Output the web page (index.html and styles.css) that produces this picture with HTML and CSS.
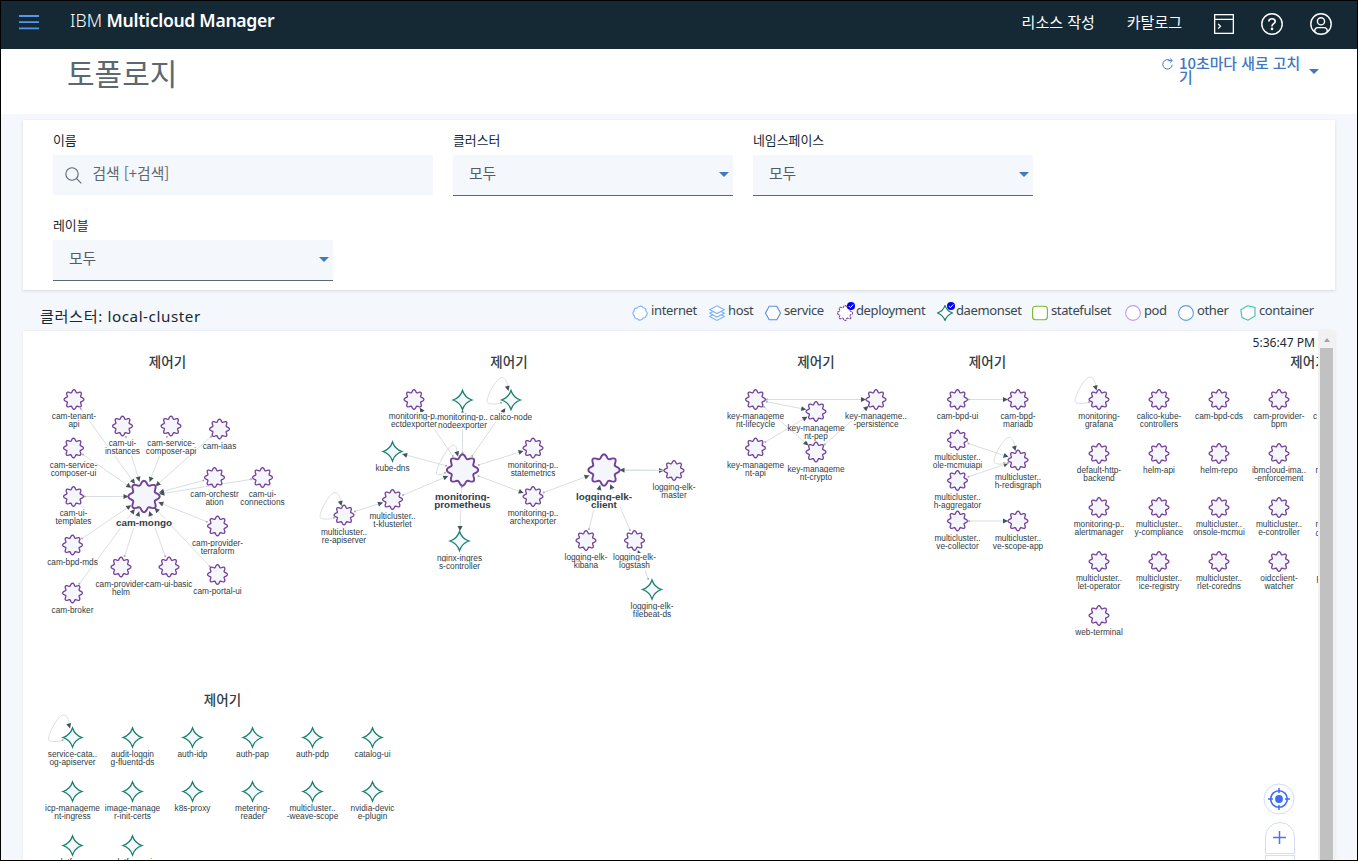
FILE: index.html
```html
<!DOCTYPE html>
<html lang="ko">
<head>
<meta charset="utf-8">
<title>IBM Multicloud Manager</title>
<link rel="stylesheet" href="styles.css">
</head>
<body>
<header class="topbar">
  <svg class="menu" width="20" height="15" viewBox="0 0 20 15"><path d="M0 1h20M0 7.2h20M0 13.4h20" stroke="#5596e6" stroke-width="1.8"/></svg>
  <div class="brand"><span class="brand-light">IBM</span> Multicloud Manager</div>
  <nav class="actions">
    <a class="act act-create">리소스 작성</a>
    <a class="act act-catalog">카탈로그</a>
    <svg class="ic-term" width="20" height="20" viewBox="0 0 20 20" fill="none" stroke="#fff" stroke-width="1.3"><rect x=".65" y=".65" width="18.7" height="18.7"/><path d="M.6 5.3h18.8M4.2 10l2.3 2.3-2.3 2.3"/></svg>
    <svg class="ic-help" width="22" height="22" viewBox="0 0 22 22" fill="none" stroke="#fff" stroke-width="1.4"><circle cx="11" cy="11" r="10.2"/><path d="M7.8 8.5c0-1.8 1.3-2.8 3.2-2.8s3.2 1.100 3.200 2.700c0 2-3.200 2.300-3.200 4.400v.6" stroke-width="1.6"/><circle cx="11" cy="15.900" r=".6" fill="#fff"/></svg>
    <svg class="ic-user" width="22" height="22" viewBox="0 0 22 22" fill="none" stroke="#fff" stroke-width="1.400"><circle cx="11" cy="11" r="10.200"/><circle cx="11" cy="8.300" r="3.600"/><path d="M4.800 19v-1.200c0-1.900 1.300-3.200 3.200-3.200h6c1.900 0 3.200 1.300 3.200 3.200V19"/></svg>
  </nav>
</header>
<div class="titlebar">
  <h1 class="title">토폴로지</h1>
  <div class="refresh">
    <svg class="refresh-ic" width="11" height="12" viewBox="0 0 11 12" fill="none" stroke="#4178be"><path d="M8.200 2.500A4.700 4.700 0 1 0 10.200 6.800M6.200 2.600h3.600M8.200.4l1.900 2.200-1.900 2.100"/></svg>
    <span class="refresh-text">10초마다 새로 고치기</span>
    <i class="caret refresh-caret"></i>
  </div>
</div>
<main class="page">
  <section class="filters">
    <div class="field field-name"><label class="label">이름</label>
      <div class="search"><svg width="17" height="17" viewBox="0 0 17 17" fill="none" stroke="#5a6872" stroke-width="1.100"><circle cx="7" cy="7" r="6.200"/><path d="M11.600 11.600l4.700 4.700"/></svg><span>검색 [+검색]</span></div></div>
    <div class="field"><label class="label">클러스터</label><div class="select"><span>모두</span><i class="caret"></i></div></div>
    <div class="field"><label class="label">네임스페이스</label><div class="select"><span>모두</span><i class="caret"></i></div></div>
    <div class="field"><label class="label">레이블</label><div class="select"><span>모두</span><i class="caret"></i></div></div>
  </section>
  <div class="cluster-head">
    <h2 class="cluster-name">클러스터: local-cluster</h2>
    <ul class="legend">
      <li><svg viewBox="0 0 16 16"><path d="M8 1.200C9.500.8 10.500 1.500 11.200 2.800 13.500 3 14.200 4 13.800 5.800 15.700 7.500 15.600 9.500 14 11 13.600 12.700 12.500 13.200 11 13 9.800 15.500 7 15.700 5.600 13.800 3.500 13.800 2.300 12.800 2.500 11 .4 9.500.4 7.500 2.200 6 1.700 3.800 3 2.900 4.800 3.200 5.500 1.900 6.500 1.300 8 1.200Z" stroke="#7cb3f5"/></svg>internet</li>
      <li><svg viewBox="0 0 16 16"><g stroke="#7cb3f5"><path d="M.8 11.500L8 15.400l7.200-3.900L8 7.600Z"/><path d="M.8 8.200L8 12.100l7.200-3.900L8 4.300Z"/><path d="M.8 4.700L8 8.600l7.200-3.900L8 .8Z"/></g></svg>host</li>
      <li><svg viewBox="0 0 16 16"><path d="M4.200 1.300h7.600L15.500 8l-3.700 6.700H4.200L.5 8Z" stroke="#5a8fd6"/></svg>service</li>
      <li><svg viewBox="0 0 16 16"><path class="legend-gear" stroke="#734098" stroke-dasharray="2.500 .8"/></svg><b class="tick"><svg viewBox="0 0 8 8"><path d="M1.800 4l1.600 1.600L6.200 2.600" stroke="#fff"/></svg></b>deployment</li>
      <li><svg viewBox="0 0 16 16"><path d="M8 .5C9.200 4 12 6.800 15.500 8 12 9.200 9.200 12 8 15.500 6.800 12 4 9.200.5 8 4 6.800 6.800 4 8 .5Z" stroke="#15806c"/></svg><b class="tick"><svg viewBox="0 0 8 8"><path d="M1.800 4l1.600 1.600L6.200 2.600" stroke="#fff"/></svg></b>daemonset</li>
      <li><svg viewBox="0 0 16 16"><rect x=".6" y="1.200" width="14.800" height="13.600" rx="3" stroke="#76b82a"/></svg>statefulset</li>
      <li><svg viewBox="0 0 16 16"><circle cx="8" cy="8" r="7.400" stroke="#c09bf0"/></svg>pod</li>
      <li><svg viewBox="0 0 16 16"><circle cx="8" cy="8" r="7.400" stroke="#5c9ae8"/></svg>other</li>
      <li><svg viewBox="0 0 16 16"><path d="M7.500.8L15 2.500V11L8 15.200 2 12.500.8 4.800Z" stroke="#3cc4b2"/></svg>container</li>
    </ul>
  </div>
  <section class="panel">
    <div class="canvas">
      <svg id="graph" class="graph" viewBox="23 331 1295 529" width="1295" height="529"></svg>
      <div class="time">5:36:47 PM</div>
      <div class="zoom">
        <svg class="target" width="32" height="32" viewBox="-16 -16 32 32" fill="none"><circle r="15" fill="#fff" stroke="#d5dcf3"/><circle r="8.300" stroke="#3d70f0" stroke-width="1.600"/><circle r="3.900" fill="#3d70f0"/><path d="M0-11v5M0 11V6M-11 0h5M11 0H6" stroke="#3d70f0" stroke-width="1.500"/></svg>
        <div class="plus"><svg width="13" height="13" viewBox="0 0 13 13"><path d="M6.500 0v13M0 6.500h13" stroke="#4a76e8" stroke-width="1.500"/></svg></div>
        <div class="minus"></div>
      </div>
    </div>
    <div class="scroll"><i class="scroll-up"></i><i class="thumb"></i></div>
  </section>
</main>
<script src="topology.js"></script>
</body>
</html>
```
FILE: styles.css
```css
* { box-sizing: border-box; }
body {
  margin: 0; height: 861px; overflow: hidden; border: 1px solid #000;
  background: #f4f7fb; color: #152935;
  font-family: Roboto, "Noto Sans CJK KR", sans-serif;
  display: flex; flex-direction: column;
}
.topbar { height: 48px; flex: none; background: #152935; color: #fff; display: flex; align-items: flex-start; padding: 0 25px 0 18px; }
.menu { margin-top: 14px; }
.brand { margin: 7px 0 0 31px; font: 600 17.6px/24px "Noto Sans", sans-serif; white-space: nowrap; letter-spacing: -.3px; }
.brand-light { font-weight: 300; letter-spacing: .1px; }
.actions { margin-left: auto; display: flex; align-items: flex-start; }
.act { font: 400 15px/22px "Noto Sans CJK KR", sans-serif; margin-top: 10px; white-space: nowrap; }
.act-catalog { margin-left: 32px; }
.ic-term { margin: 13px 0 0 32px; }
.ic-help { margin: 12px 0 0 27px; }
.ic-user { margin: 12px 0 0 27px; }
.titlebar { height: 65px; flex: none; background: #fff; display: flex; justify-content: space-between; align-items: flex-start; padding: 0 38px 0 66px; }
.title { margin: 1px 0 0; font: 400 30px/44px "Noto Sans CJK KR", sans-serif; color: #5a6872; }
.refresh { display: flex; align-items: flex-start; color: #4178be; padding-top: 7px; }
.refresh-ic { margin: 2px 6px 0 0; }
.refresh-text { width: 126px; font: 500 14.9px/14px "Noto Sans CJK KR", sans-serif; word-break: break-all; margin-right: 4px; }
.caret { border: 5px solid transparent; border-top-color: #4178be; border-bottom: 0; width: 0; height: 0; }
.refresh-caret { margin-top: 13px; }
.page { flex: 1; display: flex; flex-direction: column; padding: 6px 22px 0; min-height: 0; }
.filters { flex: none; height: 170px; background: #fff; box-shadow: 0 1px 3px rgba(0,0,0,.12); padding: 9px 30px; display: flex; flex-wrap: wrap; column-gap: 20px; align-content: flex-start; }
.field { width: 280px; height: 85px; }
.field-name { width: 380px; }
.label { display: block; height: 26px; font: 400 12.9px/21px "Noto Sans CJK KR", sans-serif; }
.search, .select { background: #f4f7fb; display: flex; align-items: center; font: 300 14.800px/20px "Noto Sans CJK KR", sans-serif; color: #5a6872; }
.search { height: 40px; padding: 0 12px; gap: 11px; }
.search span, .select span { position: relative; top: -2px; font-weight: 400; }
.select { height: 41px; border-bottom: 1px solid #5a6872; justify-content: space-between; padding: 0 4px 0 16px; color: #555b61; }
.select .caret { position: relative; top: -1px; }
.search svg { margin-left: -.5px; }
.cluster-head { flex: none; height: 41px; display: flex; justify-content: space-between; padding: 0 22px 0 17px; }
.cluster-name { margin: 13px 0 0; font: 400 15.200px/26px "Noto Sans", "Noto Sans CJK KR", sans-serif; letter-spacing: .58px; white-space: nowrap; }
.legend { list-style: none; margin: 9px 0 0; padding: 0; display: grid; grid-template-columns: 77px 56px 72px 100px 95px 93px 53px 62px 73px; font: 400 13px/20px "Noto Sans", sans-serif; letter-spacing: -.38px; color: #3a4750; height: 22px; }
.legend li { position: relative; display: flex; align-items: center; white-space: nowrap; }
.legend li > svg { width: 16px; height: 16px; margin: 5px 3px 0 0; fill: #fff; stroke-width: 1.100; flex: none; }
.tick { position: absolute; left: 10px; top: 3px; width: 8px; height: 8px; border-radius: 50%; background: #00f; }
.tick svg { display: block; fill: none; }
.panel { flex: 1; min-height: 0; background: #fff; display: flex; box-shadow: 0 0 3px rgba(0,0,0,.08); overflow: hidden; }
.canvas { flex: 1; position: relative; overflow: hidden; }
.graph { display: block; }
.time { position: absolute; right: 3px; top: 3px; font: 400 12.100px/18px "Noto Sans", sans-serif; }
.zoom { position: absolute; right: 23.5px; top: 451.5px; width: 32px; }
.target { display: block; }
.plus { width: 30px; height: 32px; margin: 7px 0 0 2px; border: 1px solid #d5dcf3; border-radius: 15px 15px 0 0; display: flex; align-items: center; justify-content: center; background: #fff; }
.minus { width: 30px; height: 30px; margin: 1px 0 0 2px; border: 1px solid #d5dcf3; background: #fff; }
.scroll { width: 17px; background: #f1f1f1; display: flex; flex-direction: column; align-items: center; }
.scroll-up { margin: 7px 0 6px; border: 3.500px solid transparent; border-bottom: 4px solid #a3a3a3; border-top: 0; }
.thumb { flex: 1; width: 13px; background: #c1c1c1; }
.edge { stroke: #d9dfe0; fill: none; }
.head { fill: #43535c; }
.dot { fill: #a3adb0; }
.gear { fill: #f4f6fb; stroke: #734098; stroke-width: 1.300; }
.gear.large { stroke-width: 1.9; }
.star { fill: #f4f7fb; stroke: #15806c; stroke-width: 1.300; }
.node-label { font: 400 8.300px "Liberation Sans", sans-serif; fill: #2f3d47; text-anchor: middle; }
.node-label.large { font-weight: 700; font-size: 9.900px; }
.node-label.cut { text-anchor: start; }
.label-bg { fill: #fff; }
.group-title { font: 500 13.500px "Noto Sans CJK KR", sans-serif; fill: #2f3d47; text-anchor: middle; }
```
FILE: topology.js
```js
// kind: g = deployment, G = large deployment, s = daemonset
const nodes = {
  tenant: ['g', 74, 399.5, 'cam-tenant-', 'api'],
  inst: ['g', 122.5, 426, 'cam-ui-', 'instances'],
  capi: ['g', 171, 426, 'cam-service-', 'composer-api'],
  iaas: ['g', 219.5, 429, 'cam-iaas'],
  cui: ['g', 73.5, 448, 'cam-service-', 'composer-ui'],
  templ: ['g', 73.5, 496.5, 'cam-ui-', 'templates'],
  orch: ['g', 214.5, 477.5, 'cam-orchestr', 'ation'],
  conn: ['g', 262.5, 477.5, 'cam-ui-', 'connections'],
  mongo: ['G', 144, 496.5, 'cam-mongo'],
  terra: ['g', 217.5, 526, 'cam-provider-', 'terraform'],
  portal: ['g', 217.5, 574.5, 'cam-portal-ui'],
  helm: ['g', 121, 567, 'cam-provider-', 'helm'],
  basic: ['g', 169, 567, 'cam-ui-basic'],
  mds: ['g', 72.5, 545, 'cam-bpd-mds'],
  broker: ['g', 72.5, 593, 'cam-broker'],
  etcd: ['g', 414, 399.5, 'monitoring-p..', 'ectdexporter'],
  nodeexp: ['s', 462.5, 400, 'monitoring-p..', 'nodeexporter'],
  calico: ['s', 511, 400, 'calico-node'],
  dns: ['s', 392.5, 451.5, 'kube-dns'],
  prom: ['G', 462.5, 470, 'monitoring-', 'prometheus'],
  state: ['g', 533, 448, 'monitoring-p..', 'statemetrics'],
  arch: ['g', 533, 496.5, 'monitoring-p..', 'archexporter'],
  klus: ['g', 392.5, 499.5, 'multicluster..', 't-klusterlet'],
  reapi: ['g', 344, 515, 'multicluster..', 're-apiserver'],
  nginx: ['s', 459.5, 541, 'nginx-ingres', 's-controller'],
  client: ['G', 604, 470, 'logging-elk-', 'client'],
  master: ['g', 674, 470.5, 'logging-elk-', 'master'],
  kibana: ['g', 586, 540.5, 'logging-elk-', 'kibana'],
  stash: ['g', 634.5, 540.5, 'logging-elk-', 'logstash'],
  fbeat: ['s', 652, 589.5, 'logging-elk-', 'filebeat-ds'],
  life: ['g', 755.5, 399.5, 'key-manageme', 'nt-lifecycle'],
  pep: ['g', 816, 411.5, 'key-manageme', 'nt-pep'],
  pers: ['g', 876, 399.5, 'key-manageme..', '-persistence'],
  kapi: ['g', 755.5, 448, 'key-manageme', 'nt-api'],
  crypto: ['g', 816, 452, 'key-manageme', 'nt-crypto'],
  bpdui: ['g', 957.5, 399.5, 'cam-bpd-ui'],
  maria: ['g', 1018, 399.5, 'cam-bpd-', 'mariadb'],
  mcmui: ['g', 957.5, 440, 'multicluster..', 'ole-mcmuiapi'],
  redis: ['g', 1018, 460, 'multicluster..', 'h-redisgraph'],
  aggr: ['g', 957.5, 480.5, 'multicluster..', 'h-aggregator'],
  coll: ['g', 957.5, 521, 'multicluster..', 've-collector'],
  scope: ['g', 1018, 521, 'multicluster..', 've-scope-app']
};

function addGrid(kind, x0, y0, rows) {
  rows.forEach((row, r) => row.forEach((lines, c) => {
    nodes[kind + r + '-' + c] = [kind, x0 + 60 * c, y0 + 54 * r, ...lines.split('|')];
  }));
}
addGrid('g', 1099, 399.5, [
  ['monitoring-|grafana', 'calico-kube-|controllers', 'cam-bpd-cds', 'cam-provider-|bpm'],
  ['default-http-|backend', 'helm-api', 'helm-repo', 'ibmcloud-ima..|-enforcement'],
  ['monitoring-p..|alertmanager', 'multicluster..|y-compliance', 'multicluster..|onsole-mcmui', 'multicluster..|e-controller'],
  ['multicluster..|let-operator', 'multicluster..|ice-registry', 'multicluster..|rlet-coredns', 'oidcclient-|watcher'],
  ['web-terminal']
]);
addGrid('s', 72.5, 737.5, [
  ['service-cata..|og-apiserver', 'audit-loggin|g-fluentd-ds', 'auth-idp', 'auth-pap', 'auth-pdp', 'catalog-ui'],
  ['icp-manageme|nt-ingress', 'image-manage|r-init-certs', 'k8s-proxy', 'metering-|reader', 'multicluster..|-weave-scope', 'nvidia-devic|e-plugin'],
  ['platform-', 'platform-ui']
]);

const edges = [
  ...['tenant', 'inst', 'capi', 'iaas', 'cui', 'templ', 'orch', 'conn', 'terra', 'portal', 'helm', 'basic', 'mds', 'broker'].map(n => [n, 'mongo']),
  ...['etcd', 'nodeexp', 'calico', 'dns', 'state', 'arch', 'nginx'].map(n => ['prom', n]),
  ['klus', 'prom'], ['reapi', 'klus'], ['arch', 'client'], ['client', 'master'], ['master', 'client'],
  ['kibana', 'client'], ['stash', 'client'], ['fbeat', 'stash'],
  ['life', 'pers'], ['life', 'pep'], ['life', 'crypto'], ['kapi', 'pep'], ['crypto', 'pers'],
  ['bpdui', 'maria'], ['mcmui', 'redis'], ['aggr', 'redis'], ['coll', 'scope']
];
const loops = ['prom', 'reapi', 'calico', 'redis', 'g0-0', 's0-0'];
const titles = [[167.5, 366.5], [509, 366.5], [816, 366.5], [987.5, 366.5], [1309, 366.5], [222.5, 704.5]];
const partial = [[1313, 419, 'c'], [1315.5, 473, 'm'], [1315.5, 527, 'm'], [1315.5, 535.5, 'c'], [1316.5, 581, 'p']];

const svg = document.getElementById('graph');
function el(name, attrs, text) {
  const e = document.createElementNS('http://www.w3.org/2000/svg', name);
  for (const k in attrs) e.setAttribute(k, attrs[k]);
  if (text) e.textContent = text;
  svg.appendChild(e);
  return e;
}
function gearPath(cx, cy, r, depth) {
  let d = '';
  for (let i = 0; i < 96; i++) {
    const a = i / 96 * Math.PI * 2;
    const q = r - depth / 2 + depth / 2 * Math.cos(8 * a);
    d += (i ? 'L' : 'M') + (cx + q * Math.sin(a)).toFixed(2) + ' ' + (cy - q * Math.cos(a)).toFixed(2);
  }
  return d + 'Z';
}
function arrow(x, y, deg) {
  el('path', { class: 'head', d: 'M0 0L-5 -2.5V2.5Z', transform: `translate(${x} ${y}) rotate(${deg})` });
}
const radius = n => n[0] === 'G' ? 15 : 9.5;

edges.forEach(([a, b]) => {
  const s = nodes[a], t = nodes[b];
  const dx = t[1] - s[1], dy = t[2] - s[2], len = Math.hypot(dx, dy), ux = dx / len, uy = dy / len;
  const r1 = radius(s) + 2, r2 = radius(t) + 0.5;
  const x1 = s[1] + ux * r1, y1 = s[2] + uy * r1, x2 = t[1] - ux * r2, y2 = t[2] - uy * r2;
  el('path', { class: 'edge', d: `M${x1} ${y1}L${x2} ${y2}` });
  el('circle', { class: 'dot', cx: x1, cy: y1, r: 1 });
  arrow(x2, y2, Math.atan2(uy, ux) * 180 / Math.PI);
});
loops.forEach(id => {
  const [k, x, y] = nodes[id];
  const big = k === 'G';
  el('path', {
    class: 'edge', transform: `translate(${x} ${y})`,
    d: big ? 'M-17.5 3C-21 5-26 5.500-26 3.500C-26-4-14-25-9-25C-6-25-6-21-5.500-18'
           : 'M-9 2.500C-14 4.500-24 5-24 1.500C-24-5-14-22.500-9-22.500C-5-22.500-4-17-3-13'
  });
  el('circle', { class: 'dot', cx: x + (big ? -17.5 : -10), cy: y + 2.7, r: 1 });
  arrow(x + (big ? -4.5 : -2.5), y + (big ? -13.5 : -9), 75);
});

Object.values(nodes).forEach(([k, x, y, ...lines]) => {
  const big = k === 'G';
  lines.forEach((line, i) => {
    const ly = y + (big ? 29.7 : 19.500) + i * 8.300;
    const w = line.length * (big ? 5.4 : 3.5);
    el('rect', { class: 'label-bg', x: x - w / 2, y: ly - 7, width: w, height: 9 });
    el('text', { class: 'node-label' + (big ? ' large' : ''), x, y: ly }, line);
  });
  if (k === 's') {
    el('path', { class: 'star', transform: `translate(${x} ${y})`, d: 'M0-9.500C1.600-4.600 4.600-1.600 9.500 0C4.600 1.600 1.600 4.600 0 9.500C-1.600 4.600-4.600 1.600-9.500 0C-4.600-1.600-1.600-4.600 0-9.500Z' });
  } else {
    el('path', { class: 'gear' + (big ? ' large' : ''), d: gearPath(x, y, big ? 15.7 : 9.9, big ? 4 : 2.7) });
  }
});
partial.forEach(([x, y, t]) => el('text', { class: 'node-label cut', x, y }, t));
titles.forEach(([x, y]) => el('text', { class: 'group-title', x, y }, '제어기'));
document.querySelector('.legend-gear').setAttribute('d', gearPath(8, 8, 7.8, 2.2));
```
